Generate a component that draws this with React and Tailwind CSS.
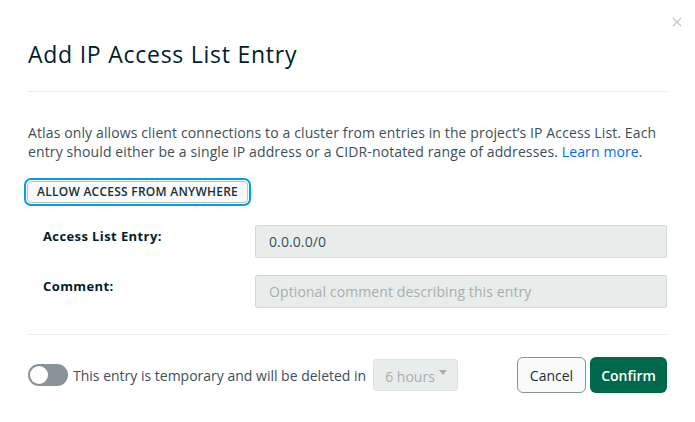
export default function App() {
  return (
    <div className="relative w-[695px] h-[422px] bg-white font-['Open_Sans',sans-serif] text-[#3D4F58] px-[28px] pt-[39px]">
      {/* close */}
      <button className="absolute top-[17px] right-[13px] w-[10px] h-[10px] text-[#C1C7C6]">
        <svg viewBox="0 0 10 10" className="w-[10px] h-[10px]" stroke="currentColor" strokeWidth="1.2" fill="none">
          <path d="M1 1 L9 9 M9 1 L1 9" />
        </svg>
      </button>

      {/* header */}
      <h1 className="text-[23px] leading-[30px] tracking-[0.75px] text-[#001E2B] font-normal">Add IP Access List Entry</h1>
      <div className="mt-[22px] h-px bg-[#E8EDEB]" />

      {/* body */}
      <p className="mt-[31px] text-[14px] leading-[19px] tracking-[0.12px]">
        Atlas only allows client connections to a cluster from entries in the project’s IP Access List. Each
        <br />
        entry should either be a single IP address or a CIDR-notated range of addresses.{" "}
        <a className="text-[#016BF8]">Learn more</a>.
      </p>

      <div className="mt-[17px] ml-[-1px]">
        <button className="h-[22px] px-[9px] rounded-[4px] border border-[#B8C4C2] bg-[#F9FBFA] text-[12px] font-semibold tracking-[0.25px] text-[#1C2D38] shadow-[0_0_0_1px_#fff,0_0_0_3px_#019EE2]">
          ALLOW ACCESS FROM ANYWHERE
        </button>
      </div>

      {/* form */}
      <div className="mt-[22px] flex flex-col gap-[17px]">
        <div className="flex items-start">
          <label className="w-[227px] pl-[15px] pt-[1px] text-[13px] font-bold tracking-[0.4px] text-[#001E2B] leading-[20px]">Access List Entry:</label>
          <div className="flex-1 h-[33px] rounded-[2px] border border-[#D3DAD8] bg-[#E8EDEB] px-[13px] flex items-center text-[14px] tracking-[0.1px] text-[#3D4F58]">
            0.0.0.0/0
          </div>
        </div>
        <div className="flex items-start">
          <label className="w-[227px] pl-[15px] pt-[1px] text-[13px] font-bold tracking-[0.4px] text-[#001E2B] leading-[20px]">Comment:</label>
          <div className="flex-1 h-[33px] rounded-[2px] border border-[#D3DAD8] bg-[#E8EDEB] px-[13px] flex items-center text-[14px] tracking-[0.1px] text-[#A6AEAE]">
            Optional comment describing this entry
          </div>
        </div>
      </div>

      <div className="mt-[26px] h-px bg-[#E8EDEB]" />

      {/* footer */}
      <div className="mt-[22px] flex items-center">
        <div className="w-[40px] h-[22px] rounded-full bg-[#889397] flex items-center pl-[2px]">
          <div className="w-[18px] h-[18px] rounded-full bg-white" />
        </div>
        <span className="ml-[5px] text-[14px] text-[#3D4F58]">This entry is temporary and will be deleted in</span>
        <div className="ml-[7px] w-[85px] h-[32px] rounded-[3px] border border-[#DDE3E1] bg-[#E8EDEB] flex items-start justify-between pl-[11px] pr-[10px]">
          <span className="mt-[6px] text-[14px] text-[#A6AEAE]">6 hours</span>
          <svg viewBox="0 0 8 5" className="mt-[10px] w-[8px] h-[5px]" fill="#A6AEAE">
            <path d="M0 0 L8 0 L4 5 Z" />
          </svg>
        </div>
        <div className="ml-auto flex gap-[4px]">
          <button className="h-[36px] w-[69px] rounded-[6px] border border-[#889397] bg-[#F9FBFA] text-[14px] text-[#1C2D38]">Cancel</button>
          <button className="h-[36px] w-[77px] rounded-[6px] bg-[#00684A] text-[14px] font-semibold text-white">Confirm</button>
        </div>
      </div>
    </div>
  );
}
